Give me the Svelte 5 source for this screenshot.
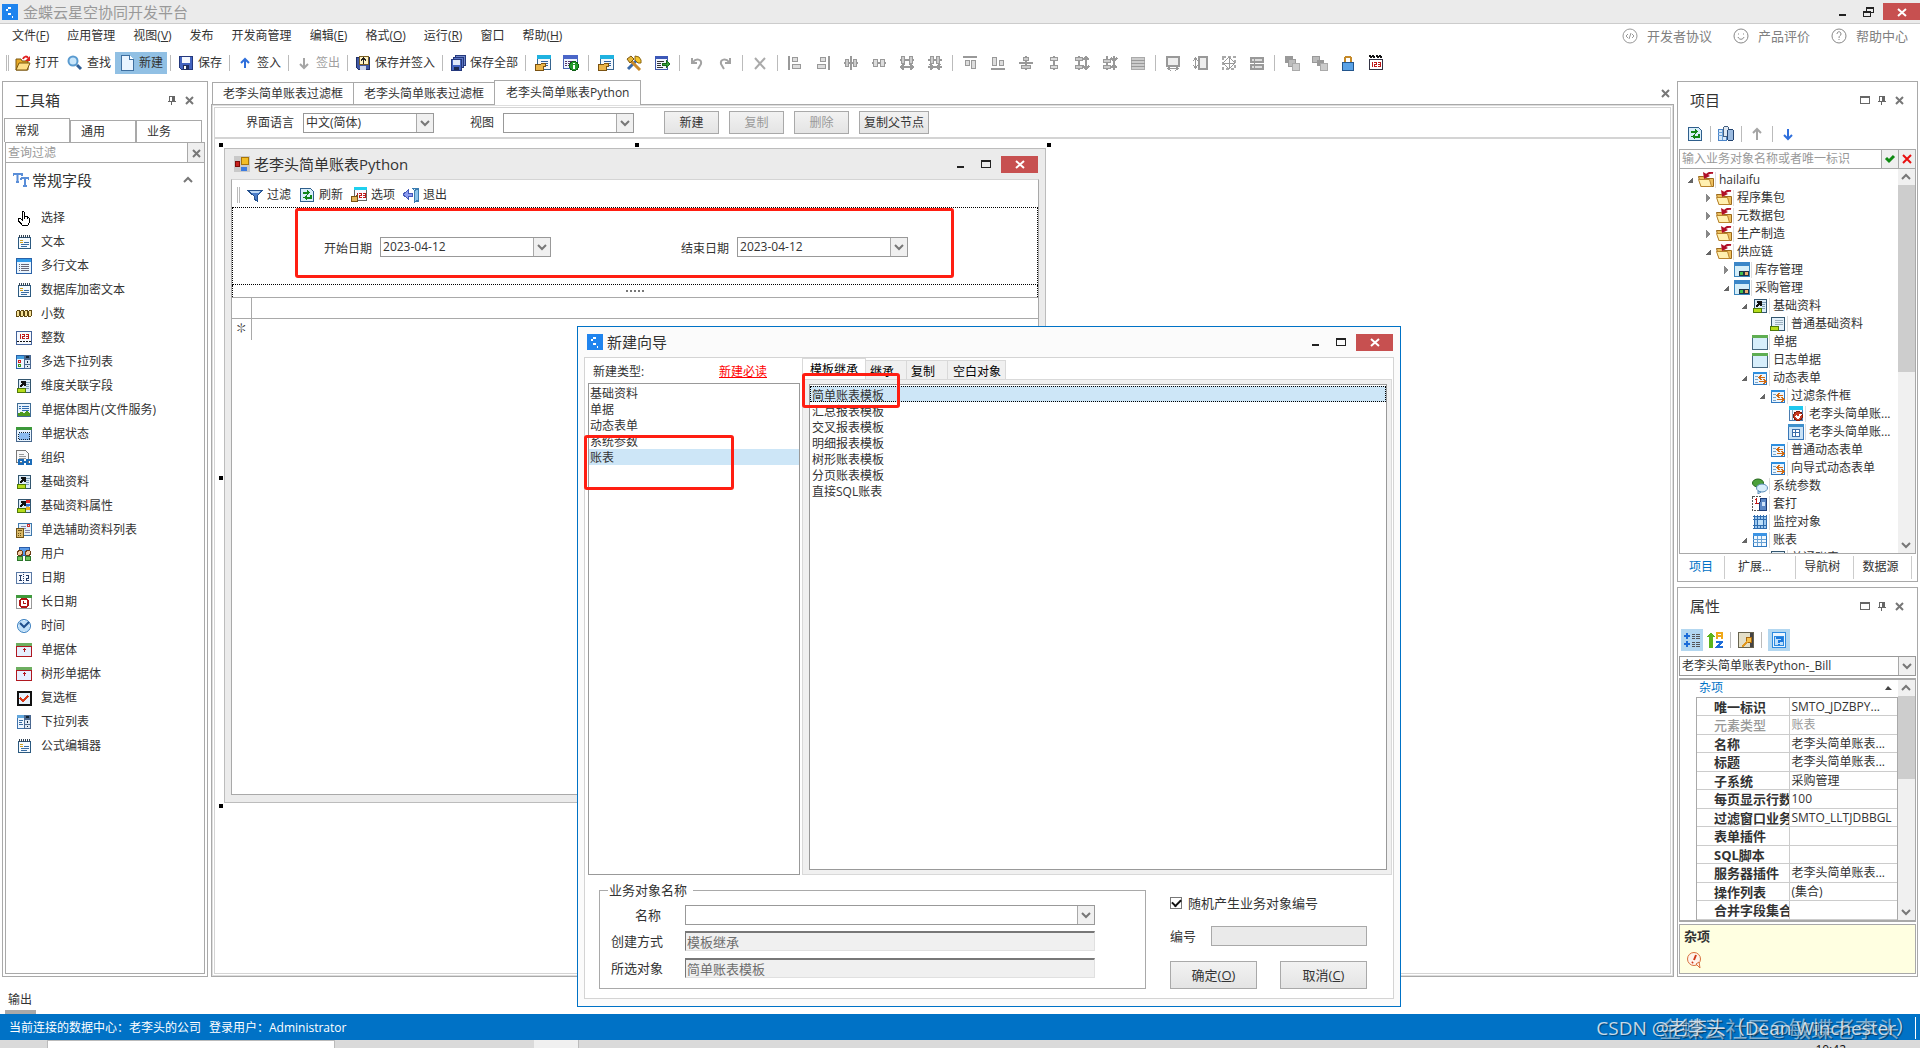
<script lang="ts">
  interface ToolItem {
    icon?: string;
    label?: string;
    active?: boolean;
    disabled?: boolean;
    sep?: boolean;
  }

  interface TreeNode {
    label: string;
    icon: string;
    depth: number;
    open?: boolean;
  }

  interface PropRow {
    name: string;
    value: string;
    muted?: boolean;
  }

  const page = (body: string) =>
    `<rect x="1.5" y="1.5" width="13" height="13" fill="#eaf4fd" stroke="#3f6c93"/>${body}`;

  const card =
    '<path d="M2.500 14.500v-13h12v13z" fill="#dcecf8" stroke="#33566f"/><path d="M9 4.500h5M10 6.500h3M10 8.500h3M10 10.500h3" stroke="#7d9db5"/><path d="M4 9l4-4M5 4h4v4" fill="none" stroke="#111" stroke-width="2"/><path d="M1.500 10.500h8v4h-8z" fill="#b5dc1c" stroke="#4f7a08"/>';

  const notepad =
    '<path d="M2.500 3.500h12v11h-12z" fill="#f4faff" stroke="#2c5a80"/><path d="M3.500 1v3M5.500 1v3M7.500 1v3M9.500 1v3M11.500 1v3M13.500 1v3" stroke="#345" fill="none"/><path d="M4 6.500h3M4 8.500h3" stroke="#d0a020"/><path d="M8 8.500h5M5 10.500h8M5 12.500h6" stroke="#3a6ca0"/>';

  const formTop =
    '<path d="M.5 1.500h15v14H.5z" fill="#d7eefb" stroke="#46677f"/><path d="M0 1h16v3H0z" fill="#5fae52"/>';

  const entry =
    '<path d="M0 1h16v3H0z" fill="#6dae60"/><path d="M.5 4.500h15v10H.5z" fill="#e6efff" stroke="#b01820"/><path d="M8.500 6v4M7 7.500h3" stroke="#b01820"/>';

  const flow =
    '<path d="M1.500 2.500h13v12h-13z" fill="#eaf5fe" stroke="#2e78c0"/><path d="M1 2h14v2H1z" fill="#2e8fe0"/><path d="M3 6.500h3M3 9.500h3M3 12.500h3" stroke="#7aa5ca"/><path d="M13 7.500H7M9.500 5L7 7.500 9.500 10M7 11.500h6M11.500 9l2.500 2.500-2.500 2.500" fill="none" stroke="#d26a12"/>';

  const cardIndex =
    '<path d="M2 2h13v12H2z" fill="#f3f8fd" stroke="#37648e"/><path d="M2 0h14v4H2z" fill="#1fb2e0"/><path d="M6 6.500h7M6 8.500h7M9 10.500h4" stroke="#2f5f9e"/><path d="M.5 9.500H5L7 8.500h3v3H8v4H.5z" fill="#eab54a" stroke="#7a5212"/>';

  const gem =
    '<path d="M.5 1.500h15v13H.5z" fill="#d5eef9" stroke="#3a86bd"/><path d="M0 0h16v4H0z" fill="#3a86c8"/><path d="M5 9h10v5H5z" fill="#234"/><path d="M6 10h3v3H6z" fill="#3fc04e"/><path d="M11 10h3v3h-3z" fill="#f0b070"/>';

  const refresh =
    '<path d="M1.500 1.500h10l3 3v10h-13z" fill="#d9eefc" stroke="#2f5f8c"/><path d="M4.500 7V5.500H9M11.500 8v2.500H8" fill="none" stroke="#12861a" stroke-width="2"/><path d="M8 2.500l3.500 3-3.500 3zM8 7.500l-3.500 3 3.500 3z" fill="#12861a"/>';

  const folder =
    '<path d="M.5 4.500h5l2 2h8v8H3z" fill="#eec05e" stroke="#9c6a1c"/><path d="M.5 7.500h11l2 7H3z" fill="#fff0b0" stroke="#b9842c"/><path d="M15 1c-4-1-6 1-7 3" fill="none" stroke="#b01028" stroke-width="2"/><path d="M5 0l1 7 6-3z" fill="#b01028"/>';

  const icons: Record<string, string> = {
    logo: '<rect width="16" height="16" rx="1" fill="#1f84ee"/><path fill="#fff" d="M6 3h3v2H6zM4 5h2v2H4zM6 9h3v2H6zM10 12h1v2h-1z"/>',
    open: '<path d="M1 4h5l1 2h6v9H1z" fill="#e7a926" stroke="#7b560e"/><path d="M4 8h11l-3 7H1z" fill="#ffe08a" stroke="#7b560e"/><path d="M8 4c1-3 4-3 5-1" fill="none" stroke="#e02020" stroke-width="2"/><path d="M15 1v5h-5z" fill="#e02020"/>',
    find: '<circle cx="6" cy="6" r="4.500" fill="#c9e6fb" stroke="#5a9bd0" stroke-width="2"/><path d="M10 10l4 4" stroke="#2f5f98" stroke-width="3"/>',
    blank: '<path d="M2.500 .5h8l4 4v11h-12z" fill="#e8f4ff" stroke="#3e6fa0"/><path d="M10.500 .5v4h4" fill="#fff" stroke="#3e6fa0"/>',
    save: '<path d="M1.500 1.500h13v13h-11l-2-2z" fill="#4364c0" stroke="#24387c"/><path d="M4 2h8v6H4z" fill="#f4f8ff"/><path d="M5 10h6v5H5z" fill="#1f2f60"/><path d="M6 11h2v3H6z" fill="#fff"/>',
    up: '<path d="M8 13V4M4 8l4-4 4 4" fill="none" stroke="#2f6fdc" stroke-width="2"/>',
    down: '<path d="M8 3v10M4 9l4 4 4-4" fill="none" stroke="#2f6fdc" stroke-width="2"/>',
    upGray: '<path d="M8 14V3M4 7l4-4 4 4" fill="none" stroke="#a5a5a5" stroke-width="2"/>',
    downGray: '<path d="M8 3v10M4 9l4 4 4-4" fill="none" stroke="#a5a5a5" stroke-width="2"/>',
    saveIn: '<path d="M1.500 2.500h13v12h-11l-2-2z" fill="#4058a4" stroke="#1f2f66"/><path d="M4 1h9v8H4z" fill="#fff3c4" stroke="#7b5f22"/><path d="M8.500 9V3M6 5.500L8.500 3 11 5.500" fill="none" stroke="#222"/><path d="M5 11h6v4H5z" fill="#cfd8ee"/>',
    saveAll: '<path d="M5.500 .5h10v10h-10z" fill="#7088cc" stroke="#24387c"/><path d="M3.500 2.500h10v10h-10z" fill="#5a74c4" stroke="#24387c"/><path d="M1.500 4.500h10v11h-10z" fill="#4364c0" stroke="#24387c"/><path d="M3 5h7v5H3z" fill="#dfe8fa"/><path d="M4 12h5v3H4z" fill="#1a2850"/>',
    index: cardIndex,
    info: '<path d="M.5 1.500h14v12H.5z" fill="#eef4ff" stroke="#4a62b0"/><path d="M0 0h15v4H0z" fill="#4a66c8"/><path d="M2 6.500h2M2 8.500h2M2 10.500h2M5 6.500h8M5 8.500h4M5 10.500h2" stroke="#536"/><circle cx="11" cy="11" r="4.500" fill="#239a2c" stroke="#0e5f14"/><path d="M11 8v1M11 10v4" stroke="#fff" stroke-width="2"/>',
    tools: '<path d="M2 14l8-8" stroke="#3b6aa8" stroke-width="3"/><path d="M4 5l10 10" stroke="#c98a2a" stroke-width="3"/><path d="M1 4l4-3 3 3-4 4z" fill="#e8b93a" stroke="#7b560e"/><path d="M9 1v4l3 3h3V5l-2-3z" fill="#f5c52c" stroke="#8a6510"/>',
    export: '<path d="M1.500 1.500h12v13h-12z" fill="#f2f6ff" stroke="#4058a8"/><path d="M1 1h13v3H1z" fill="#3c58b8"/><path d="M3 6.500h7M3 8.500h4M3 10.500h4M3 12.500h6" stroke="#333"/><path d="M8 8h4V5l4 4-4 4v-3H8z" fill="#37a03a" stroke="#17661c"/>',
    undo: '<path d="M3 3v5h5M4 7c3-4 9-3 8 2l-3 5" fill="none" stroke="#a2a2a2" stroke-width="2"/>',
    redo: '<path d="M13 3v5H8M12 7C9 3 3 4 4 9l3 5" fill="none" stroke="#a2a2a2" stroke-width="2"/>',
    del: '<path d="M3 3l10 11M13 3L3 14" stroke="#aaa" stroke-width="2"/>',
    alignL: '<path d="M2 1v14" stroke="#999" stroke-width="2"/><path d="M5.500 2.500h5v4h-5zM5.500 9.500h8v4h-8z" fill="#ddd" stroke="#999"/>',
    alignR: '<path d="M14 1v14" stroke="#999" stroke-width="2"/><path d="M5.500 2.500h5v4h-5zM2.500 9.500h8v4h-8z" fill="#ddd" stroke="#999"/>',
    alignC: '<path d="M1 8h14M8 1v14" stroke="#999" stroke-width="2"/><path d="M2.500 4.500h3v7h-3zM10.500 4.500h3v7h-3z" fill="#ccc" stroke="#999"/>',
    spaceH: '<path d="M1 8h14" stroke="#999" stroke-width="2"/><path d="M2.500 4.500h4v7h-4zM9.500 4.500h4v7h-4z" fill="#ddd" stroke="#999"/>',
    spaceH2: '<path d="M1 5h14M2 12h12" stroke="#999" stroke-width="2"/><path d="M2.500 1.500h3v7h-3zM10.500 1.500h3v7h-3z" fill="#ccc" stroke="#999"/><path d="M5 9l-3 3 3 3M11 9l3 3-3 3" stroke="#999" fill="none" stroke-width="2"/>',
    spaceH3: '<path d="M1 5h14M1 12h14" stroke="#999" stroke-width="2"/><path d="M3.500 1.500h3v7h-3zM9.500 1.500h3v7h-3z" fill="#ccc" stroke="#999"/><path d="M3 9l3 3-3 3M13 9l-3 3 3 3" stroke="#999" fill="none" stroke-width="2"/>',
    alignT: '<path d="M1 2h14" stroke="#999" stroke-width="2"/><path d="M3.500 5.500h4v5h-4zM9.500 5.500h4v8h-4z" fill="#ddd" stroke="#999"/>',
    alignB: '<path d="M1 14h14" stroke="#999" stroke-width="2"/><path d="M2.500 2.500h4v8h-4zM9.500 5.500h4v5h-4z" fill="#ddd" stroke="#999"/>',
    alignM: '<path d="M8 1v14M1 8h14" stroke="#999" stroke-width="2"/><path d="M5.500 2.500h5v3h-5zM3.500 10.500h9v3h-9z" fill="#ccc" stroke="#999"/>',
    spaceV: '<path d="M8 1v14" stroke="#999" stroke-width="2"/><path d="M4.500 2.500h7v3h-7zM4.500 10.500h7v3h-7z" fill="#ddd" stroke="#999"/>',
    spaceV2: '<path d="M5 1v14M12 2v12" stroke="#999" stroke-width="2"/><path d="M1.500 2.500h7v3h-7zM1.500 10.500h7v3h-7z" fill="#ccc" stroke="#999"/><path d="M9 5l3-3 3 3M9 11l3 3 3-3" stroke="#999" fill="none" stroke-width="2"/>',
    spaceV3: '<path d="M5 1v14M12 1v14" stroke="#999" stroke-width="2"/><path d="M1.500 4.500h7v3h-7zM1.500 10.500h7v3h-7z" fill="#ccc" stroke="#999"/><path d="M9 3l3 3 3-3M9 13l3-3 3 3" stroke="#999" fill="none" stroke-width="2"/>',
    rows: '<path d="M1.500 2.500h13v12h-13z" fill="#ccc" stroke="#aaa"/><path d="M1 5.500h14M1 8.500h14M1 11.500h14" stroke="#999"/>',
    sizeW: '<path d="M2 2h12v9H2z" fill="#eee" stroke="#999" stroke-width="2"/><path d="M3 13.500h10M6 11l-3 2.500L6 16M10 11l3 2.500-3 2.500" fill="none" stroke="#999"/>',
    sizeH: '<path d="M6 2h8v12H6z" fill="#eee" stroke="#999" stroke-width="2"/><path d="M2.500 3v10M0 6l2.500-3L5 6M0 10l2.500 3L5 10" fill="none" stroke="#999"/>',
    sizeB: '<path d="M2 2h12v12H2z" fill="none" stroke="#aaa" stroke-width="2" stroke-dasharray="3 2"/><path d="M8 2v12M2 8h12M5 5l3-3 3 3M5 11l3 3 3-3M5 5L2 8l3 3M11 5l3 3-3 3" fill="none" stroke="#999"/>',
    split: '<path d="M2 3h12v4H2zM2 10h12v4H2z" fill="#ddd" stroke="#999" stroke-width="2"/><path d="M5.500 3v11" stroke="#999"/>',
    front: '<path d="M1 1h8v7H1z" fill="#999"/><path d="M4.500 4.500h7v7h-7z" fill="#bbb" stroke="#999"/><path d="M8.500 8.500h7v7h-7z" fill="#ccc" stroke="#aaa"/>',
    back: '<path d="M.5 1.500h7v6h-7z" fill="#bbb" stroke="#999"/><path d="M5 5h7v6H5z" fill="#999"/><path d="M8.500 8.500h7v7h-7z" fill="#ccc" stroke="#aaa"/>',
    lock: '<path d="M5 8V4c0-3 6-3 6 0v4" fill="none" stroke="#c58a2a" stroke-width="2"/><path d="M2.500 7.500h11v8h-11z" fill="#5aa2e6" stroke="#22558c"/>',
    cal: '<path d="M1.500 4.500h13v10h-13z" fill="#fff" stroke="#334"/><path d="M2 0l1 3M5 0l1 3M9 0l1 3M12 0l1 3" stroke="#111" stroke-width="2"/><path d="M4.500 7v5M6 7.500h2.500v2H6.500v2H9M10 7.500h2.500v4H10M10 9.500h3" fill="none" stroke="#c01818"/>',
    filter: '<path d="M0 3h16L10 9v5l-3-2V9z" fill="#4a7cc8" stroke="#23508e"/><path d="M2 4h11l-2 2H4z" fill="#bcd8f6"/>',
    refresh,
    option: '<path d="M3.500 1.500h12v12h-12z" fill="#f8f8ff" stroke="#666"/><path d="M3 0h13v3H3z" fill="#1fd0ee"/><path d="M6.500 6v5M8 6.500h2v2H8.500v2H11M12 6.500h2.500v4H12M12 8.500h2" fill="none" stroke="#c01818"/><path d="M.5 9.500h4l2-1v6h-6z" fill="#e2b45a" stroke="#7a5212"/>',
    exit: '<path d="M9.500 1.500h6v13l-4-2v-9z" fill="#d4ecfa" stroke="#3a7cb0"/><path d="M15.500 1.500l-4 2v12l4-3z" fill="#8cc4ea" stroke="#3a7cb0"/><path d="M9 6H5V3L0 7.500 5 12V9h4z" fill="#8c9cf0" stroke="#4458b8"/>',
    winform: '<path d="M0 0h16v16H0z" fill="#c9c9c9"/><path d="M7.500 1.500h7v7h-7z" fill="#f2bd26" stroke="#a87408"/><path d="M1.500 5.500h4v5h-4z" fill="#c8201c" stroke="#7c0c08"/><path d="M7 11h6v4H7z" fill="#3c7be0"/>',
    hand: '<path d="M6 9V2c0-1 2-1 2 0v5c2-1 5 0 6 2 0 3-1 4-2 6H6c-1-2-3-3-4-5 0-2 2-2 4 0z" fill="#fff" stroke="#000"/><path d="M8.500 6v3M11.500 7v2" stroke="#000"/>',
    notepad,
    multi: '<path d="M.5 .5h15v15H.5z" fill="#e9f4fd" stroke="#2a62a8"/><path d="M1 1h14v3H1z" fill="#2f9ae8"/><path d="M3 6.500h1M3 8.500h1M3 10.500h1M3 12.500h1M5 6.500h8M5 8.500h8M5 10.500h8M5 12.500h8" stroke="#667"/>',
    decimal: '<path d="M.5 6c0-2 3-2 3 0v3c0 2-3 2-3 0zM4.500 6c0-2 3-2 3 0v3c0 2-3 2-3 0zM8.500 6c0-2 3-2 3 0v3c0 2-3 2-3 0zM12.500 6c0-2 3-2 3 0v3c0 2-3 2-3 0z" fill="#f6e29a" stroke="#5f4a12"/>',
    integer: '<path d="M.5 1.500h15v13H.5z" fill="#f6f9ff" stroke="#44639a"/><path d="M4.500 4v5M6 4.500h2.500v2h-2v2H9M10 4.500h2.500v4H10M10 6.500h3" fill="none" stroke="#c01818"/><path d="M1 11.500h14" stroke="#111" stroke-dasharray="2 1"/>',
    multiDrop: '<path d="M.5 1.500h14v13H.5z" fill="#eef6ff" stroke="#2a62a8"/><path d="M1 2h8v3H1z" fill="#45a0e0"/><path d="M8 1h7v14H8z" fill="#4a6890"/><path d="M9 6h5v4H9zM9 11h5v3H9z" fill="#dfeaf6"/><path d="M11 7h1v2h-1zM11 12h1v1h-1zM10 2h3v2h-3z" fill="#123"/><path d="M2.500 6.500h2v2h-2z" fill="none" stroke="#d02020"/><path d="M2.500 10.500h2v2h-2z" fill="none" stroke="#3a9a20"/>',
    card,
    picture: page('<path d="M3 4.500h2M6 4.500h7M3 6.500h2M6 6.500h7M6 8.500h7" stroke="#2f6cb0"/><path d="M2 14v-3l3-1 3 1 3-2 3 2v3z" fill="#4d9a1e"/>'),
    state: '<path d="M.5 1.500h15v14H.5z" fill="#e8f4ff" stroke="#47678c"/><path d="M0 1h16v3H0z" fill="#3c983a"/><path d="M2.500 6.500h11v7h-11z" fill="#8cbcf0" stroke="#123" stroke-dasharray="1 1"/>',
    org: '<path d="M.5 .5h9l3 3v9H.5z" fill="#f8f8f8" stroke="#777"/><path d="M3 4.500h5M3 6.500h7M3 8.500h7" stroke="#999"/><path d="M3 10h4v4H3zM11 10h4v4h-4zM7 12h4" fill="none" stroke="#1c6cb8" stroke-width="2"/>',
    cardColor: card + '<path d="M10 2h4v3h-4z" fill="#e02828"/><path d="M10 6h4v2h-4z" fill="#2f6fe0"/><path d="M10 9h4v3h-4z" fill="#f2b01c"/>',
    assist: '<path d="M2.500 1.500h13v12h-13z" fill="#e4f1fb" stroke="#3f78ac"/><path d="M5 4.500h5M5 6.500h5M9 8.500h5M9 10.500h5" stroke="#88a"/><path d="M11.500 2.500h2v2h-2z" fill="none" stroke="#d03030"/><path d="M.5 6.500h7v9h-7z" fill="#d8b868" stroke="#735618"/><path d="M2 8.500h4M2 11.500h1M4 11.500h1M2 13.500h1M4 13.500h1" fill="none" stroke="#6a5018"/>',
    user: '<path d="M3 1h10v8H3z" fill="#5c9be8" stroke="#2a5ca8"/><circle cx="4" cy="7" r="2.500" fill="#f6c9a0" stroke="#6b3d18"/><circle cx="12" cy="7" r="2.500" fill="#f6c9a0" stroke="#6b3d18"/><path d="M1.500 10.500h5v4h-5zM9.500 10.500h5v4h-5z" fill="#6fc45a" stroke="#2c762c"/>',
    date: '<path d="M.5 2.500h15v11H.5z" fill="#f6f9ff" stroke="#5b7aa5"/><path d="M7.500 2v12" stroke="#223a66" stroke-dasharray="1 1"/><path d="M3 5.500h3M4.500 6v4M3 10.500h3M10 5.500h2.500v2.500h-2v2.500H13" fill="none" stroke="#223a66"/>',
    longDate: '<path d="M.5 2.500h15v12H.5z" fill="#fff" stroke="#999"/><path d="M0 1h16v3H0z" fill="#3f9a3c"/><circle cx="8" cy="9" r="4.500" fill="#fff" stroke="#b01818" stroke-width="2"/><path d="M7.500 7v2.500H10" fill="none" stroke="#b01818"/>',
    time: '<circle cx="8" cy="8" r="6.500" fill="#bfe0fa" stroke="#3b7fbf"/><path d="M4 5l4 4 5-5" fill="none" stroke="#1f4f8c" stroke-width="2"/><path d="M8 2v1M8 13v1M2 8h1M13 8h1" stroke="#fff"/>',
    entry,
    check: '<path d="M2 2h13v13H2z" fill="#e6f2fd" stroke="#111" stroke-width="2"/><path d="M4 8l3 3 5-5" fill="none" stroke="#d83818" stroke-width="2"/>',
    drop: '<path d="M1.500 1.500h13v13h-13z" fill="#eef6ff" stroke="#3e72ac"/><path d="M1 1h8v3H1z" fill="#62a8de"/><path d="M8 1h7v14H8z" fill="#4a6890"/><path d="M9 6h5v4H9zM9 11h5v3H9z" fill="#dfeaf6"/><path d="M11 7h1v2h-1zM11 12h1v1h-1zM10 2h3v2h-3z" fill="#123"/><path d="M3 6.500h4M3 8.500h3M3 10.500h4" stroke="#3a6ca0"/>',
    folder,
    gem,
    cardPlain: '<path d="M1.500 14.500V1.500h13v13z" fill="#e4f1fa" stroke="#33566f"/><path d="M5 4.500h8M5 6.500h8M5 8.500h8" stroke="#9db0bd"/><path d="M.5 10.500h8v4h-8z" fill="#b5dc1c" stroke="#4f7a08"/>',
    form: formTop,
    flow,
    filterForm: '<path d="M1.500 1.500h13v13h-13z" fill="#f5f9ff" stroke="#4a7cb0"/><path d="M1 0h14v4H1z" fill="#1fc8ee"/><path d="M4.500 4v10" stroke="#8ab"/><circle cx="10" cy="10" r="4.500" fill="#c83a20" stroke="#7c1c0c"/><path d="M8 10l2 2 3-4" fill="none" stroke="#fff" stroke-width="2"/>',
    gridForm: '<path d="M.5 .5h15v15H.5z" fill="#c9e2f6" stroke="#3a78b8"/><path d="M0 0h16v3H0z" fill="#3f90cc"/><path d="M4.500 5.500h7v7h-7zM7.500 5.500v7M4.500 8.500h7" fill="#fff" stroke="#3a6ca8"/>',
    chat: '<ellipse cx="6" cy="5" rx="5.500" ry="4" fill="#4ca03c" stroke="#22661a"/><ellipse cx="10" cy="10" rx="5.500" ry="4" fill="#d8edfb" stroke="#5a8cb8"/><path d="M6 13v3l3-2z" fill="#d8edfb" stroke="#5a8cb8"/>',
    print: '<path d="M.5 .5h8v14h-8z" fill="#fff" stroke="#555" stroke-dasharray="2 1"/><path d="M4.500 2v5M3 3.500h1M3 7.500h4" stroke="#c01818"/><path d="M8.500 2.500h6v12h-7v-5z" fill="#5a86c4" stroke="#1c3c78"/><path d="M10 6h3v4h-3z" fill="#cfe2f8"/>',
    monitor: '<path d="M2 2h12v12H2z" fill="#9cc8f0"/><path d="M2.500 1v14M5.500 1v14M8.500 1v14M11.500 1v14M14.500 1v14M1 2.500h14M1 5.500h14M1 11.500h14M1 14.500h14" stroke="#2f6cae"/><path d="M5.500 5.500h6v6h-6z" fill="#bfe0fa" stroke="#2f6cae"/>',
    report: '<path d="M1.500 2.500h13v12h-13z" fill="#f0f8ff" stroke="#2e78c0"/><path d="M1 1h14v3H1z" fill="#3c94e4"/><path d="M5.500 4v10M9.500 4v10M1 7.500h13M1 10.500h13" stroke="#6aa2d4"/>',
    db: '<path d="M.5 3.500h8v11h-8z" fill="#d7e8fa" stroke="#4a84c8"/><path d="M0 6.500h8M0 9.500h8M4.500 4v10" stroke="#6aa0d8"/><path d="M5.500 2c0-2 5-2 5 0v8h-5z" fill="#dfe8f2" stroke="#445f80"/><path d="M9.500 5c0-2 6-2 6 0v8c0 2-6 2-6 0z" fill="#9cbbe0" stroke="#244470"/>',
    category: '<path d="M0 4h6M3 1v6M0 12h6M3 9v6" stroke="#1c6cd8" stroke-width="2"/><path d="M8 2.500h3M12 2.500h4M8 4.500h3M12 4.500h4M8 6.500h3M12 6.500h4M8 10.500h3M12 10.500h4M8 12.500h3M12 12.500h4M8 14.500h3M12 14.500h4" stroke="#555"/>',
    sort: '<path d="M2 16V5H0l4-5 4 5H6v11z" fill="#5cb51c"/><path d="M10 7V1h5v6M10 4h5" fill="none" stroke="#f0a818" stroke-width="2"/><path d="M9 10h6l-5 5h6" fill="none" stroke="#1c6cd8" stroke-width="2"/>',
    key: '<path d="M.5 .5h15v15H.5z" fill="#e4dfc8" stroke="#66624e"/><path d="M12 1h3v14h-3z" fill="#444"/><circle cx="11" cy="8" r="3" fill="#f8c048" stroke="#a86810"/><path d="M9 10l-5 5" stroke="#e09820" stroke-width="2"/>',
    help: '<path d="M1.500 .5h13v15h-13z" fill="#eaf5ff" stroke="#2c8ae0"/><path d="M3.500 4.500h9v9h-9z" fill="#bfe0fb" stroke="#2c8ae0"/><path d="M6 7V6h5v3H8v2M8 12v1" fill="none" stroke="#1c78dc" stroke-width="2"/>',
    tt: '<path d="M0 2h9v2M4.500 2v8M3 10h3M0 2v2M8 6h8v2M12 6v8M10 14h4M8 6v2" fill="none" stroke="#5a8ed8" stroke-width="2"/>',
    tip: '<circle cx="8" cy="7" r="6.500" fill="#fff4ec" stroke="#d8703c"/><path d="M10 12l4 4-1-6z" fill="#fff4ec" stroke="#d8703c"/><path d="M10 3l-2 5M7 10l-1 1" stroke="#d03818" stroke-width="2"/>',
    pin: '<path d="M5.500 4.500h5v5h-5zM4 9.500h8M7.500 10v3" fill="none" stroke="#666"/><path d="M8 4h3v5H8z" fill="#666"/>',
    close: '<path d="M5 5l7 7M12 5l-7 7" stroke="#777" stroke-width="2"/>',
    box: '<path d="M3.500 4.500h9v7h-9z" fill="none" stroke="#666"/><path d="M3 5h10" stroke="#666" stroke-width="2"/>',
    chevDown: '<path d="M4 6l4 4 4-4" fill="none" stroke="#777" stroke-width="2"/>',
    chevUp: '<path d="M4 10l4-4 4 4" fill="none" stroke="#777" stroke-width="2"/>',
    yes: '<path d="M4 7l3 3 5-5" fill="none" stroke="#0e8a12" stroke-width="3"/>',
    no: '<path d="M4 4l8 8M12 4l-8 8" stroke="#e81010" stroke-width="2"/>',
    collapsed: '<path d="M6 4v9l4-5z" fill="#888"/>',
    expanded: '<path d="M11 5v6H5z" fill="#666"/>',
    code: '<circle cx="8" cy="8" r="7" fill="none" stroke="#999"/><path d="M6 6L4 8l2 2M10 6l2 2-2 2M9 5l-2 6" fill="none" stroke="#999"/>',
    smile: '<circle cx="8" cy="8" r="7" fill="none" stroke="#888"/><path d="M5 6h1M10 6h1M5 9c1 3 5 3 6 0" fill="none" stroke="#888"/>',
    question: '<circle cx="8" cy="8" r="7" fill="none" stroke="#888"/><path d="M6 6c0-3 4-3 4 0 0 2-2 1-2 4M8 11v1" fill="none" stroke="#888"/>',
    min: '<path d="M5 11h7" stroke="#222" stroke-width="2"/>',
    max: '<path d="M3.500 4.500h9v7h-9z" fill="none" stroke="#222"/><path d="M3 5h10" stroke="#222" stroke-width="2"/>',
    restore: '<path d="M6.500 7V3.500h7v5H11M3.500 7.500h7v5h-7z" fill="none" stroke="#222"/><path d="M6 4h8M3 8h8" stroke="#222" stroke-width="2"/>',
    closeWhite: '<path d="M4 5l8 7M12 5l-8 7" stroke="#fff" stroke-width="2"/>',
  };

  // drawn with curves or diagonals, so they keep their smooth edges
  const smooth = [
    'find', 'undo', 'redo', 'tt', 'close', 'closeWhite', 'no', 'chevDown', 'chevUp', 'code', 'smile',
    'question', 'tip', 'time', 'folder', 'open', 'tools', 'chat', 'del', 'yes', 'up', 'down', 'upGray', 'downGray',
  ];

  const menus = [
    ['文件', 'F'], ['应用管理'], ['视图', 'V'], ['发布'], ['开发商管理'],
    ['编辑', 'E'], ['格式', 'O'], ['运行', 'R'], ['窗口'], ['帮助', 'H'],
  ];

  const textTools: ToolItem[] = [
    { icon: 'open', label: '打开' },
    { icon: 'find', label: '查找' },
    { icon: 'blank', label: '新建', active: true },
    { sep: true },
    { icon: 'save', label: '保存' },
    { sep: true },
    { icon: 'up', label: '签入' },
    { sep: true },
    { icon: 'downGray', label: '签出', disabled: true },
    { sep: true },
    { icon: 'saveIn', label: '保存并签入' },
    { sep: true },
    { icon: 'saveAll', label: '保存全部' },
    { sep: true },
  ];

  const iconTools = [
    ['index', 'info'],
    ['index', 'tools', 'export'],
    ['undo', 'redo'],
    ['del'],
    ['alignL', 'alignR', 'alignC', 'spaceH', 'spaceH2', 'spaceH3'],
    ['alignT', 'alignB', 'alignM', 'spaceV', 'spaceV2', 'spaceV3', 'rows'],
    ['sizeW', 'sizeH', 'sizeB', 'split'],
    ['front', 'back', 'lock', 'cal'],
  ];

  const fields = [
    ['hand', '选择'], ['notepad', '文本'], ['multi', '多行文本'], ['notepad', '数据库加密文本'],
    ['decimal', '小数'], ['integer', '整数'], ['multiDrop', '多选下拉列表'], ['card', '维度关联字段'],
    ['picture', '单据体图片(文件服务)'], ['state', '单据状态'], ['org', '组织'], ['card', '基础资料'],
    ['cardColor', '基础资料属性'], ['assist', '单选辅助资料列表'], ['user', '用户'], ['date', '日期'],
    ['longDate', '长日期'], ['time', '时间'], ['entry', '单据体'], ['entry', '树形单据体'],
    ['check', '复选框'], ['drop', '下拉列表'], ['notepad', '公式编辑器'],
  ];

  const tree: TreeNode[] = [
    { label: 'hailaifu', icon: 'folder', depth: 0, open: true },
    { label: '程序集包', icon: 'folder', depth: 1, open: false },
    { label: '元数据包', icon: 'folder', depth: 1, open: false },
    { label: '生产制造', icon: 'folder', depth: 1, open: false },
    { label: '供应链', icon: 'folder', depth: 1, open: true },
    { label: '库存管理', icon: 'gem', depth: 2, open: false },
    { label: '采购管理', icon: 'gem', depth: 2, open: true },
    { label: '基础资料', icon: 'card', depth: 3, open: true },
    { label: '普通基础资料', icon: 'cardPlain', depth: 4 },
    { label: '单据', icon: 'form', depth: 3 },
    { label: '日志单据', icon: 'form', depth: 3 },
    { label: '动态表单', icon: 'flow', depth: 3, open: true },
    { label: '过滤条件框', icon: 'flow', depth: 4, open: true },
    { label: '老李头简单账...', icon: 'filterForm', depth: 5 },
    { label: '老李头简单账...', icon: 'gridForm', depth: 5 },
    { label: '普通动态表单', icon: 'flow', depth: 4 },
    { label: '向导式动态表单', icon: 'flow', depth: 4 },
    { label: '系统参数', icon: 'chat', depth: 3 },
    { label: '套打', icon: 'print', depth: 3 },
    { label: '监控对象', icon: 'monitor', depth: 3 },
    { label: '账表', icon: 'report', depth: 3, open: true },
    { label: '普通账表', icon: 'cardPlain', depth: 4 },
  ];

  const props: PropRow[] = [
    { name: '唯一标识', value: 'SMTO_JDZBPY...' },
    { name: '元素类型', value: '账表', muted: true },
    { name: '名称', value: '老李头简单账表...' },
    { name: '标题', value: '老李头简单账表...' },
    { name: '子系统', value: '采购管理' },
    { name: '每页显示行数', value: '100' },
    { name: '过滤窗口业务', value: 'SMTO_LLTJDBBGL' },
    { name: '表单插件', value: '' },
    { name: 'SQL脚本', value: '' },
    { name: '服务器插件', value: '老李头简单账表...' },
    { name: '操作列表', value: '(集合)' },
    { name: '合并字段集合', value: '' },
  ];

  const kinds = ['基础资料', '单据', '动态表单', '系统参数', '账表'];
  const templates = [
    '简单账表模板', '汇总报表模板', '交叉报表模板', '明细报表模板',
    '树形账表模板', '分页账表模板', '直接SQL账表',
  ];

  let kind = $state('账表');
  let template = $state('简单账表模板');
  let randomCode = $state(true);
</script>

{#snippet ico(name: string)}
  <svg class="ico" class:ico--smooth={smooth.includes(name)} viewBox="0 0 16 16" aria-hidden="true">{@html icons[name]}</svg>
{/snippet}

{#snippet combo(id: string, value: string)}
  <span class="combo">
    <select {id} aria-label={id}><option>{value}</option></select>
    <span class="combo__arrow">{@render ico('chevDown')}</span>
  </span>
{/snippet}

{#snippet caption(middle: string)}
  <div class="caption">
    <button aria-label="最小化">{@render ico('min')}</button>
    <button aria-label="最大化">{@render ico(middle)}</button>
    <button class="caption__close" aria-label="关闭">{@render ico('closeWhite')}</button>
  </div>
{/snippet}

{#snippet dockHead(title: string, full: boolean)}
  <header class="dock__head">
    <h2>{title}</h2>
    {#if full}<button aria-label="还原">{@render ico('box')}</button>{/if}
    <button aria-label="固定">{@render ico('pin')}</button>
    <button aria-label="关闭">{@render ico('close')}</button>
  </header>
{/snippet}

{#snippet scrollbar(kindClass: string)}
  <div class="scroll">
    {@render ico('chevUp')}
    <div class="scroll__track"><div class="scroll__thumb {kindClass}"></div></div>
    {@render ico('chevDown')}
  </div>
{/snippet}

<div class="app">
  <header class="titlebar">
    {@render ico('logo')}
    <h1>金蝶云星空协同开发平台</h1>
    {@render caption('restore')}
  </header>

  <nav class="menubar">
    {#each menus as [label, key]}
      <button>{label}{#if key}(<u>{key}</u>){/if}</button>
    {/each}
    <div class="menubar__links">
      <a href="#agreement">{@render ico('code')}开发者协议</a>
      <a href="#review">{@render ico('smile')}产品评价</a>
      <a href="#help">{@render ico('question')}帮助中心</a>
    </div>
  </nav>

  <div class="toolbar">
    <span class="grip"></span>
    {#each textTools as t}
      {#if t.sep}
        <span class="sep"></span>
      {:else}
        <button class="tool" class:tool--active={t.active} disabled={t.disabled}>
          {@render ico(t.icon ?? '')}{t.label}
        </button>
      {/if}
    {/each}
    <div class="toolbar__icons">
      {#each iconTools as group, i}
        {#if i > 0}<span class="sep"></span>{/if}
        {#each group as name}
          <button aria-label={name}>{@render ico(name)}</button>
        {/each}
      {/each}
    </div>
  </div>

  <main class="workspace">
    <aside class="dock toolbox">
      {@render dockHead('工具箱', false)}
      <div class="toolbox__tabs">
        <button class="on">常规</button>
        <button>通用</button>
        <button>业务</button>
      </div>
      <div class="toolbox__body">
        <div class="search">
          <input type="text" placeholder="查询过滤" aria-label="查询过滤" />
          <button aria-label="清除">{@render ico('close')}</button>
        </div>
        <button class="toolbox__group">
          {@render ico('tt')}<span>常规字段</span>{@render ico('chevUp')}
        </button>
        <ul class="toolbox__list">
          {#each fields as [icon, label]}
            <li>{@render ico(icon)}{label}</li>
          {/each}
        </ul>
      </div>
    </aside>

    <section class="editor">
      <div class="editor__tabs">
        <button>老李头简单账表过滤框</button>
        <button>老李头简单账表过滤框</button>
        <button class="on">老李头简单账表Python</button>
        <button class="editor__close" aria-label="关闭">{@render ico('close')}</button>
      </div>
      <div class="editor__pane">
        <div class="editor__inner">
          <div class="langbar">
            <label for="language">界面语言</label>
            {@render combo('language', '中文(简体)')}
            <label class="langbar__view" for="view">视图</label>
            {@render combo('view', '')}
            <div class="langbar__buttons">
              <button class="btn">新建</button>
              <button class="btn" disabled>复制</button>
              <button class="btn" disabled>删除</button>
              <button class="btn btn--wide">复制父节点</button>
            </div>
          </div>

          <div class="selection">
            <i class="handle handle--tl"></i>
            <i class="handle handle--tc"></i>
            <i class="handle handle--tr"></i>
            <i class="handle handle--ml"></i>
            <i class="handle handle--bl"></i>
            <div class="form">
              <header class="form__head">
                {@render ico('winform')}
                <h2>老李头简单账表Python</h2>
                {@render caption('max')}
              </header>
              <div class="form__client">
                <div class="form__tools">
                  <span class="grip"></span>
                  <button class="tool">{@render ico('filter')}过滤</button>
                  <button class="tool">{@render ico('refresh')}刷新</button>
                  <button class="tool">{@render ico('option')}选项</button>
                  <button class="tool">{@render ico('exit')}退出</button>
                </div>
                <div class="filter">
                  <label for="start-date">开始日期</label>
                  {@render combo('start-date', '2023-04-12')}
                  <label class="filter__end" for="end-date">结束日期</label>
                  {@render combo('end-date', '2023-04-12')}
                  <div class="mark mark--dates"></div>
                </div>
                <div class="splitter"><i></i><i></i><i></i><i></i><i></i></div>
                <table class="entry">
                  <tbody>
                    <tr><th></th><td></td></tr>
                    <tr><th>✽</th><td></td></tr>
                  </tbody>
                </table>
              </div>
            </div>
          </div>
        </div>
      </div>
    </section>

    <div class="side">
      <aside class="dock project">
        {@render dockHead('项目', true)}
        <div class="dock__tools">
          <button aria-label="刷新">{@render ico('refresh')}</button>
          <span class="sep"></span>
          <button aria-label="数据">{@render ico('db')}</button>
          <span class="sep"></span>
          <button aria-label="上移">{@render ico('upGray')}</button>
          <span class="sep"></span>
          <button aria-label="下移">{@render ico('down')}</button>
        </div>
        <div class="search project__search">
          <input type="text" placeholder="输入业务对象名称或者唯一标识" aria-label="输入业务对象名称或者唯一标识" />
          <button aria-label="确定">{@render ico('yes')}</button>
          <button aria-label="取消">{@render ico('no')}</button>
        </div>
        <div class="project__tree">
          <ul>
            {#each tree as node}
              <li style:padding-left="{node.depth * 18}px">
                <span class="twist">
                  {#if node.open !== undefined}{@render ico(node.open ? 'expanded' : 'collapsed')}{/if}
                </span>
                {@render ico(node.icon)}
                <span class="project__label">{node.label}</span>
              </li>
            {/each}
          </ul>
          {@render scrollbar('scroll__thumb--half')}
        </div>
        <nav class="project__tabs">
          <button class="on">项目</button>
          <button>扩展...</button>
          <button>导航树</button>
          <button>数据源</button>
        </nav>
      </aside>

      <aside class="dock props">
        {@render dockHead('属性', true)}
        <div class="dock__tools props__tools">
          <button class="on" aria-label="分类">{@render ico('category')}</button>
          <button aria-label="排序">{@render ico('sort')}</button>
          <span class="sep"></span>
          <button aria-label="权限">{@render ico('key')}</button>
          <span class="sep"></span>
          <button class="on" aria-label="说明">{@render ico('help')}</button>
        </div>
        {@render combo('props-object', '老李头简单账表Python-_Bill')}
        <div class="props__grid">
          <div class="props__rows">
            <div class="props__cat"><span>杂项</span><svg viewBox="0 0 7 4"><path d="M0 4l3-4 4 4z" fill="#444" /></svg></div>
            <div class="props__wrap">
              <table>
                <tbody>
                  {#each props as row}
                    <tr class:muted={row.muted}><th>{row.name}</th><td>{row.value}</td></tr>
                  {/each}
                </tbody>
              </table>
            </div>
          </div>
          {@render scrollbar('scroll__thumb--third')}
        </div>
        <div class="props__note">
          <strong>杂项</strong>
          {@render ico('tip')}
        </div>
      </aside>
    </div>
  </main>

  <div class="output"><button>输出</button></div>

  <footer class="status">
    <span>当前连接的数据中心：老李头的公司</span>
    <span>登录用户：Administrator</span>
    <div class="stamp">
      <span class="stamp__back">金蝶云社区@敏蝶老李头</span>
      <span class="stamp__front">CSDN @老李头（Dean Winchester）</span>
    </div>
  </footer>

  <div class="taskbar">
    <i class="taskbar__start"></i><i class="taskbar__search"></i><i class="taskbar__gap"></i><i class="taskbar__app"></i>
    <time>10:42</time>
  </div>

  <div class="wizard" role="dialog" aria-label="新建向导">
    <header class="wizard__head">
      {@render ico('logo')}
      <h2>新建向导</h2>
      {@render caption('max')}
    </header>
    <div class="wizard__client">
      <div class="wizard__top">
        <div class="wizard__kinds">
          <div class="wizard__label"><span>新建类型:</span><a href="#guide">新建必读</a></div>
          <ul class="listbox">
            {#each kinds as k}
              <li><button class:on={k === kind} onclick={() => (kind = k)}>{k}</button></li>
            {/each}
          </ul>
        </div>
        <div class="wizard__templates">
          <div class="wizard__tabs">
            <button class="on">模板继承</button>
            <button>继承</button>
            <button>复制</button>
            <button>空白对象</button>
          </div>
          <div class="wizard__pane">
            <ul class="listbox listbox--focus">
              {#each templates as t}
                <li><button class:on={t === template} onclick={() => (template = t)}>{t}</button></li>
              {/each}
            </ul>
          </div>
        </div>
      </div>
      <div class="wizard__bottom">
        <fieldset>
          <legend>业务对象名称</legend>
          <label for="object-name" class="short">名称</label>
          {@render combo('object-name', '')}
          <label for="create-mode">创建方式</label>
          <input id="create-mode" type="text" value="模板继承" disabled />
          <label for="picked">所选对象</label>
          <input id="picked" type="text" value={template} disabled />
        </fieldset>
        <div class="wizard__side">
          <label class="tick"><input type="checkbox" bind:checked={randomCode} />随机产生业务对象编号</label>
          <div class="code"><label for="code">编号</label><input id="code" type="text" disabled /></div>
          <div class="actions">
            <button class="btn">确定(<u>O</u>)</button>
            <button class="btn">取消(<u>C</u>)</button>
          </div>
        </div>
      </div>
    </div>
    <div class="mark mark--kind"></div>
    <div class="mark mark--template"></div>
  </div>
</div>

<style>
  :global(body) {
    margin: 0;
    background: #fff;
  }

  .app {
    --line: #a9a9a9;
    --soft: #d4d4d4;
    --blue: #0072c6;
    position: relative;
    display: flex;
    flex-direction: column;
    height: 100vh;
    overflow: hidden;
    background: #fff;
    color: #333;
    font: 12px/16px "Open Sans", "Noto Sans CJK SC", sans-serif;
  }

  .app * {
    box-sizing: border-box;
  }

  button,
  input,
  select {
    margin: 0;
    padding: 0;
    border: 0;
    border-radius: 0;
    background: none;
    color: inherit;
    font: inherit;
  }

  h1,
  h2 {
    margin: 0;
    font-size: 15px;
    font-weight: 400;
    line-height: 20px;
  }

  ul {
    margin: 0;
    padding: 0;
    list-style: none;
  }

  a {
    color: inherit;
    text-decoration: none;
  }

  .ico {
    display: block;
    flex: none;
    width: 16px;
    height: 16px;
    shape-rendering: crispEdges;
  }

  .ico--smooth {
    shape-rendering: auto;
  }

  .sep {
    flex: none;
    width: 1px;
    height: 16px;
    margin: 0 3px;
    background: #bbb;
  }

  .grip {
    width: 3px;
    height: 16px;
    border: 1px solid #bbb;
    border-width: 0 1px;
  }

  /* window caption buttons */
  .caption {
    display: flex;
    align-items: center;
    margin-left: auto;
  }

  .caption button {
    display: flex;
    align-items: center;
    justify-content: center;
    width: 26px;
    height: 17px;
  }

  .caption .caption__close {
    width: 37px;
    margin-left: 2px;
    background: #c75050;
  }

  .titlebar {
    display: flex;
    flex: none;
    align-items: center;
    gap: 5px;
    height: 24px;
    padding-left: 2px;
    border-bottom: 1px solid #ccc;
    background: #ebebeb;
    color: #999;
  }

  .menubar {
    display: flex;
    flex: none;
    align-items: center;
    gap: 18px;
    height: 24px;
    padding: 0 12px;
  }

  .menubar__links {
    display: flex;
    gap: 21px;
    margin-left: auto;
    color: #808080;
    font-size: 13px;
  }

  .menubar__links a {
    display: flex;
    align-items: center;
    gap: 9px;
  }

  .toolbar {
    display: flex;
    flex: none;
    align-items: center;
    height: 30px;
    margin-bottom: 2px;
    padding-left: 6px;
  }

  .toolbar .grip {
    margin-right: 2px;
  }

  .tool {
    display: flex;
    align-items: center;
    gap: 4px;
    height: 22px;
    padding: 0 4px;
  }

  .tool--active {
    background: #91c0e4;
  }

  .tool:disabled {
    color: #a0a0a0;
  }

  .toolbar__icons {
    display: flex;
    align-items: center;
  }

  .toolbar__icons button {
    padding: 0 6px;
  }

  .workspace {
    display: flex;
    flex: 1;
    gap: 3px;
    min-height: 0;
    padding: 0 2px;
  }

  .dock {
    display: flex;
    flex-direction: column;
    min-height: 0;
    border: 1px solid var(--line);
  }

  .dock__head {
    display: flex;
    flex: none;
    align-items: center;
    gap: 1px;
    height: 36px;
    padding: 0 10px 0 12px;
  }

  .dock__head h2 {
    flex: 1;
  }

  .dock__tools {
    display: flex;
    flex: none;
    align-items: center;
    gap: 4px;
    height: 31px;
    padding-left: 9px;
  }

  .search {
    display: flex;
    flex: none;
    height: 20px;
    border-bottom: 1px solid var(--line);
  }

  .search input {
    flex: 1;
    min-width: 0;
    padding: 0 2px;
  }

  .search input::placeholder {
    color: #999;
  }

  .search button {
    width: 17px;
    border-left: 1px solid var(--line);
    background: #efefef;
  }

  .toolbox {
    flex: none;
    width: 206px;
    margin-top: 1px;
  }

  .toolbox__tabs {
    display: flex;
    flex: none;
    align-items: flex-end;
    height: 24px;
    padding: 0 5px 0 1px;
  }

  .toolbox__tabs button {
    flex: 1;
    height: 22px;
    padding-left: 10px;
    border: 1px solid var(--line);
    border-bottom: 0;
    text-align: left;
  }

  .toolbox__tabs .on {
    height: 24px;
  }

  .toolbox__body {
    flex: 1;
    min-height: 0;
    margin: 0 2px 2px;
    overflow: hidden;
    border: 1px solid var(--line);
  }

  .toolbox__group {
    display: flex;
    align-items: center;
    gap: 3px;
    width: 100%;
    height: 34px;
    margin-bottom: 9px;
    padding: 0 8px 0 7px;
    font-size: 15px;
  }

  .toolbox__group span {
    flex: 1;
    text-align: left;
  }

  .toolbox__list li {
    display: flex;
    align-items: center;
    gap: 9px;
    height: 24px;
    padding-left: 10px;
  }

  .editor {
    display: flex;
    flex: 1;
    flex-direction: column;
    min-width: 0;
  }

  .editor__tabs {
    display: flex;
    flex: none;
    align-items: flex-end;
    height: 25px;
    margin-bottom: -1px;
    padding: 0 1px;
    z-index: 1;
  }

  .editor__tabs button {
    height: 23px;
    padding: 0 10px;
    border: 1px solid var(--line);
    border-right-width: 0;
    background: #fff;
  }

  .editor__tabs .on {
    height: 25px;
    padding: 0 11px;
    border-right-width: 1px;
    border-bottom: 0;
  }

  .editor__tabs .editor__close {
    align-self: center;
    height: 16px;
    margin-left: auto;
    padding: 0;
    border: 0;
  }

  .editor__pane {
    display: flex;
    flex: 1;
    min-height: 0;
    padding: 2px;
    border: 1px solid var(--line);
    box-shadow: inset 0 0 0 1px #dedede;
  }

  .editor__inner {
    flex: 1;
    min-width: 0;
    overflow: hidden;
    border: 1px solid var(--soft);
  }

  .langbar {
    display: flex;
    align-items: center;
    gap: 9px;
    height: 31px;
    padding-left: 31px;
    border-bottom: 2px solid var(--soft);
  }

  .langbar .combo {
    width: 131px;
  }

  .langbar__view {
    margin-left: 27px;
  }

  .langbar__buttons {
    display: flex;
    gap: 10px;
    margin-left: 21px;
  }

  .combo {
    display: grid;
    height: 20px;
    border: 1px solid #999;
    background: #fff;
  }

  .combo select {
    grid-area: 1 / 1;
    width: 100%;
    padding: 0 20px 0 2px;
    appearance: none;
  }

  .combo__arrow {
    display: flex;
    grid-area: 1 / 1;
    align-items: center;
    justify-content: center;
    justify-self: end;
    width: 17px;
    border-left: 1px solid var(--line);
    background: #f0f0f0;
    pointer-events: none;
  }

  .btn {
    min-width: 55px;
    height: 23px;
    border: 1px solid var(--line);
    background: linear-gradient(#f2f2f2, #e4e4e4);
  }

  .btn:disabled {
    color: #999;
  }

  .btn--wide {
    padding: 0 4px;
  }

  /* selected form on the design surface, with its grab handles */
  .selection {
    position: relative;
    width: 832px;
    height: 665px;
    margin: 4px;
    padding: 5px;
  }

  .handle {
    position: absolute;
    width: 4px;
    height: 4px;
    background: #000;
  }

  .handle--tl {
    top: 0;
    left: 0;
  }

  .handle--tc {
    top: 0;
    left: 50%;
  }

  .handle--tr {
    top: 0;
    right: 0;
  }

  .handle--ml {
    top: 50%;
    left: 0;
  }

  .handle--bl {
    bottom: 0;
    left: 0;
  }

  .form {
    display: flex;
    flex-direction: column;
    height: 100%;
    padding: 0 6px 7px;
    border: 1px solid #bcbcbc;
    background: #ebebeb;
  }

  .form__head,
  .wizard__head {
    display: flex;
    flex: none;
    align-items: center;
    gap: 4px;
    height: 30px;
    padding: 0 1px 0 3px;
  }

  .form__client {
    display: flex;
    flex: 1;
    flex-direction: column;
    border: 1px solid var(--line);
    border-top-color: var(--soft);
    background: #fff;
  }

  .form__tools {
    display: flex;
    flex: none;
    align-items: center;
    height: 27px;
    padding: 2px 0 0 5px;
  }

  .form__tools .grip {
    margin-right: 3px;
  }

  .filter {
    position: relative;
    display: flex;
    flex: none;
    align-items: flex-start;
    gap: 8px;
    height: 78px;
    padding: 29px 0 0 91px;
    border: 1px dotted #000;
  }

  .filter label {
    line-height: 24px;
  }

  .filter .combo {
    width: 171px;
  }

  .filter__end {
    margin-left: 122px;
  }

  .mark {
    position: absolute;
    border: 3px solid #ff1e12;
    border-radius: 3px;
    pointer-events: none;
  }

  .mark--dates {
    top: 0;
    left: 62px;
    width: 659px;
    height: 70px;
  }

  .splitter {
    display: flex;
    flex: none;
    align-items: center;
    justify-content: center;
    gap: 2px;
    height: 12px;
    border: 1px dotted #000;
    border-width: 0 1px;
  }

  .splitter i {
    width: 2px;
    height: 2px;
    background: #777;
  }

  .entry {
    width: 100%;
    border-collapse: collapse;
  }

  .entry th {
    width: 19px;
    height: 21px;
    padding: 0;
    border-right: 1px solid var(--line);
    color: #333;
    font-size: 12px;
    font-weight: 400;
  }

  .entry td {
    padding: 0;
  }

  .entry tr:first-child {
    border: 1px solid var(--line);
    border-width: 1px 0;
  }

  .side {
    display: flex;
    flex: none;
    flex-direction: column;
    gap: 5px;
    width: 241px;
    margin-top: 1px;
  }

  .project {
    flex: 9 1 0;
  }

  .project__search {
    margin: 0 1px;
    border: 1px solid var(--line);
  }

  .project__tree {
    display: flex;
    flex: 1;
    min-height: 0;
    margin: 0 1px;
    border: 1px solid var(--line);
    border-top: 0;
  }

  .project__tree ul {
    flex: 1;
    min-width: 0;
    padding-top: 2px;
    overflow: hidden;
  }

  .project__tree li {
    display: flex;
    align-items: center;
    height: 18px;
    white-space: nowrap;
  }

  .twist {
    width: 18px;
    padding-left: 2px;
  }

  .project__label {
    margin-left: 1px;
    padding-left: 3px;
    border-left: 1px solid #ddd;
  }

  .scroll {
    display: flex;
    flex: none;
    flex-direction: column;
    width: 17px;
    background: #f0f0f0;
  }

  .scroll__track {
    flex: 1;
  }

  .scroll__thumb {
    background: #cdcdcd;
  }

  .scroll__thumb--half {
    height: 53%;
  }

  .scroll__thumb--third {
    height: 40%;
  }

  .project__tabs {
    display: flex;
    flex: none;
    height: 27px;
    padding: 2px 5px 2px 0;
  }

  .project__tabs button {
    flex: 59 1 0;
    padding-right: 4px;
    border-right: 1px solid #ccc;
  }

  .project__tabs button:first-child {
    flex-grow: 51;
    padding-right: 0;
    color: var(--blue);
  }

  .project__tabs button:nth-child(2) {
    flex-grow: 66;
    padding-right: 10px;
  }

  .props {
    flex: 7 1 0;
  }

  .props > .combo {
    flex: none;
    margin: 0 1px 2px;
  }

  .props__tools {
    gap: 3px;
    height: 32px;
    padding-left: 3px;
  }

  .props__tools button {
    padding: 3px 4px;
  }

  .props__tools button:nth-child(2),
  .props__tools button:nth-child(4) {
    padding: 3px 1px;
  }

  .props__tools .on {
    padding: 3px;
    background: #b3d7f0;
  }

  .props__grid {
    display: flex;
    flex: 1;
    min-height: 0;
    margin: 0 1px;
    border: 2px solid var(--line);
    border-width: 2px 1px;
  }

  .props__rows {
    display: flex;
    flex: 1;
    flex-direction: column;
    min-width: 0;
  }

  .props__cat {
    display: flex;
    flex: none;
    align-items: center;
    justify-content: space-between;
    height: 17px;
    padding: 0 6px 0 19px;
    color: var(--blue);
  }

  .props__cat svg {
    width: 7px;
    height: 4px;
  }

  .props__wrap {
    flex: 1;
    min-height: 0;
    margin-left: 16px;
    overflow: hidden;
    border: 1px solid var(--line);
    border-bottom: 0;
  }

  .props table {
    width: 100%;
    height: 100%;
    table-layout: fixed;
    border-collapse: collapse;
  }

  .props tr {
    border-bottom: 1px solid #ccc;
  }

  .props th {
    width: 92px;
    padding: 0 0 0 17px;
    overflow: hidden;
    border-right: 1px solid #ccc;
    font-size: 13px;
    text-align: left;
    white-space: nowrap;
  }

  .props td {
    padding: 0 0 0 2px;
    overflow: hidden;
    white-space: nowrap;
  }

  .props .muted {
    color: #999;
  }

  .props .muted th {
    font-weight: 500;
  }

  .props__note {
    display: flex;
    flex: none;
    flex-direction: column;
    gap: 8px;
    height: 50px;
    margin: 2px 1px;
    padding: 3px 4px;
    border: 1px solid var(--line);
    background: #ffffe1;
    font-size: 13px;
  }

  .props__note .ico {
    margin-left: 2px;
  }

  .output {
    flex: none;
    height: 37px;
    padding: 0 5px;
  }

  .output button {
    height: 100%;
    padding: 12px 4px 0 3px;
    border-bottom: 4px solid var(--line);
  }

  .status {
    display: flex;
    flex: none;
    align-items: center;
    gap: 8px;
    height: 26px;
    padding: 1px 0 0 9px;
    background: var(--blue);
    color: #fff;
  }

  .stamp {
    display: grid;
    justify-items: end;
    height: 22px;
    margin-right: 4px;
    margin-left: auto;
    border-right: 1px solid #fff;
    line-height: 22px;
    white-space: nowrap;
  }

  .stamp span {
    grid-area: 1 / 1;
  }

  .stamp__back {
    padding-right: 16px;
    color: rgba(255, 255, 255, 0.5);
    font-size: 22px;
    text-shadow: 1px 1px 1px rgba(0, 0, 0, 0.4);
  }

  .stamp__front {
    color: rgba(235, 240, 245, 0.85);
    font-size: 19px;
    text-shadow: 1px 1px 1px rgba(0, 0, 0, 0.4);
  }

  .taskbar {
    display: flex;
    flex: none;
    height: 8px;
    overflow: hidden;
    background: #dadada;
  }

  .taskbar__start {
    width: 48px;
    border-right: 1px solid #bbb;
  }

  .taskbar__search {
    width: 287px;
    border: 1px solid #bbb;
    border-width: 1px 1px 0 0;
    background: #fff;
  }

  .taskbar__gap {
    width: 199px;
  }

  .taskbar__app {
    width: 45px;
    border-right: 1px solid #bbb;
    background: #f0f0f0;
  }

  .taskbar time {
    margin-left: auto;
    padding: 2px 74px 0 0;
    color: #111;
  }

  .wizard {
    position: absolute;
    top: 326px;
    left: 577px;
    display: flex;
    flex-direction: column;
    width: 824px;
    height: 681px;
    padding: 0 6px 7px;
    border: 1px solid var(--blue);
    background: #fbfbfb;
  }

  .wizard__client {
    display: flex;
    flex: 1;
    flex-direction: column;
    min-height: 0;
    border: 1px solid var(--soft);
    background: #fff;
  }

  .wizard__top {
    display: flex;
    flex: 1;
    gap: 2px;
    min-height: 0;
    padding: 0 1px 0 3px;
  }

  .wizard__kinds {
    display: flex;
    flex-direction: column;
    width: 212px;
  }

  .wizard__label {
    display: flex;
    justify-content: space-between;
    height: 25px;
    padding: 6px 33px 0 5px;
  }

  .wizard__label a {
    color: #f00;
    text-decoration: underline;
  }

  .listbox {
    flex: 1;
    padding-top: 1px;
    border: 1px solid #999;
    background: #fff;
  }

  .listbox li {
    height: 16px;
  }

  .listbox button {
    display: block;
    width: 100%;
    height: 16px;
    padding: 1px 1px 0;
    line-height: 15px;
    text-align: left;
  }

  .listbox .on {
    background: #cde6f7;
  }

  .listbox--focus button {
    border: 1px dotted transparent;
  }

  .listbox--focus .on {
    border-color: #000;
  }

  .wizard__templates {
    display: flex;
    flex: 1;
    flex-direction: column;
  }

  .wizard__tabs {
    display: flex;
    align-items: flex-end;
    height: 22px;
    margin-bottom: -1px;
    color: #000;
  }

  .wizard__tabs button {
    height: 20px;
    padding: 3px 12px 0 4px;
    border: 1px solid #d9d9d9;
    border-left: 0;
    background: #f0f0f0;
    line-height: 15px;
  }

  .wizard__tabs button:last-child {
    padding: 3px 4px 0 5px;
  }

  .wizard__tabs .on {
    height: 22px;
    padding: 0 7px;
    border-bottom: 0;
    border-left: 1px solid #d9d9d9;
    background: #fff;
  }

  .wizard__pane {
    display: flex;
    flex: 1;
    padding: 4px 4px 4px 6px;
    border: 1px solid #d9d9d9;
    background: #f0f0f0;
  }

  .wizard__bottom {
    display: flex;
    flex: none;
    gap: 24px;
    padding: 7px 26px 9px 14px;
    font-size: 13px;
  }

  .wizard__bottom fieldset {
    display: grid;
    flex: 1;
    grid-template-columns: auto 1fr;
    gap: 6px 22px;
    align-items: center;
    margin: 0;
    padding: 7px 50px 10px 11px;
    border: 1px solid var(--line);
  }

  .wizard__bottom legend {
    margin-left: -3px;
    padding: 0 6px 0 1px;
  }

  .short {
    justify-self: end;
    padding-right: 2px;
  }

  .wizard__bottom input[type='text'] {
    height: 20px;
    padding: 0 1px;
    border: 1px solid #e0e0e0;
    border-top: 2px solid #777;
    border-left-color: #777;
    background: #f0f0f0;
    color: #6d6d6d;
  }

  .wizard__side {
    display: flex;
    flex-direction: column;
    gap: 15px;
    width: 197px;
    padding-top: 13px;
  }

  .tick {
    display: flex;
    align-items: center;
    gap: 6px;
  }

  .tick input {
    display: grid;
    width: 12px;
    height: 12px;
    border: 1px solid #777;
    background: #fff;
    appearance: none;
    place-items: center;
  }

  .tick input:checked::before {
    width: 7px;
    height: 4px;
    margin-bottom: 3px;
    border: 2px solid #111;
    border-width: 0 0 2px 2px;
    content: '';
    rotate: -45deg;
  }

  .code {
    display: flex;
    align-items: center;
    gap: 15px;
  }

  .wizard__bottom .code input {
    flex: 1;
    min-width: 0;
    border: 1px solid var(--line);
    background: #eaeaea;
  }

  .actions {
    display: flex;
    gap: 23px;
  }

  .actions .btn {
    flex: 1;
    height: 28px;
  }

  .mark--kind {
    top: 108px;
    left: 6px;
    width: 150px;
    height: 55px;
  }

  .mark--template {
    top: 46px;
    left: 224px;
    width: 98px;
    height: 35px;
  }
</style>
